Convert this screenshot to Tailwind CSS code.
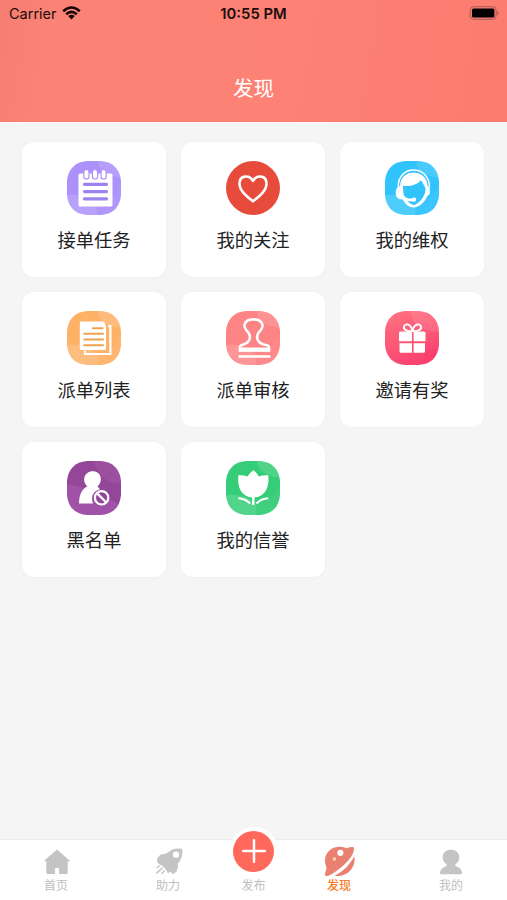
<!DOCTYPE html>
<html lang="zh-CN">
<head>
<meta charset="utf-8">
<meta name="viewport" content="width=device-width, initial-scale=1">
<title>发现</title>
<script src="https://cdn.jsdelivr.net/npm/@tailwindcss/browser@4"></script>
</head>
<body class="bg-[#f5f5f5]">
<svg width="0" height="0" class="absolute" aria-hidden="true">
  <defs>
    <clipPath id="tile"><path d="M20 0H34C46 1 53 8 54 20V34C53 46 46 53 34 54H20C8 53 1 46 0 34V20C1 8 8 1 20 0Z"/></clipPath>
    <linearGradient id="pink" x1="0" y1="0" x2="0.4" y2="1"><stop stop-color="#ff7580"/><stop offset="1" stop-color="#fb4370"/></linearGradient>
    <g id="facets">
      <path d="M31 0Q31 14 54 17V0Z" fill="#fff" opacity=".13"/>
      <path d="M0 34Q20 32 30 43V54H0Z" fill="#fff" opacity=".15"/>
      <path d="M30 43Q46 40 54 24V54H30Z" fill="#fff" opacity=".05"/>
    </g>
  </defs>
</svg>
<div class="flex h-[900px] w-[507px] flex-col overflow-hidden font-['Inter','Noto_Sans_CJK_SC',sans-serif]">
  <header class="flex h-[122px] shrink-0 flex-col bg-[linear-gradient(100deg,#f67d71_0%,#fb8276_10%,#fd8276_50%,#fc7b6f_100%)]">
    <div class="grid h-7 grid-cols-3 items-center px-[8px] text-[#1c0d0c]">
      <div class="flex items-center gap-[6px] pl-px text-[14.5px]">
        <span>Carrier</span>
        <svg class="-ml-px -mt-0.5 h-[14px] w-[19px]" viewBox="0 0 19 14" fill="none" stroke="#160808" stroke-width="2.5"><path d="M1.2 5.2Q9.5-2.2 17.8 5.2M4.2 8.3Q9.5 3.5 14.8 8.3"/><path d="M6.2 10.1Q9.5 7.5 12.8 10.1L9.5 13.5Z" fill="#160808" stroke="none"/></svg>
      </div>
      <div class="whitespace-nowrap text-center text-[14.8px] font-semibold">10:55 PM</div>
      <svg class="-mt-0.5 h-[14px] w-[30px] justify-self-end" viewBox="0 0 30 14"><rect x="1.2" y=".7" width="26" height="12.6" rx="3.6" fill="none" stroke="#a45a54"/><rect x="3" y="2.5" width="22.4" height="9" rx="1.6" fill="#000"/><path d="M28.6 4.8Q31 7 28.6 9.2Z" fill="#a45a54"/></svg>
    </div>
    <h1 class="mt-[45px] text-center text-[20.5px] leading-[32px] text-white">发现</h1>
  </header>

  <main class="grid flex-1 grid-cols-[repeat(3,144px)] auto-rows-[135px] content-start gap-x-[15px] gap-y-[15.2px] px-[22px] pt-5 text-[18.3px] leading-[28px] text-[#222]">
    <section class="flex flex-col items-center gap-[11px] rounded-[12px] bg-white pt-[19px] shadow-[0_0_3px_#0000000a]">
      <svg class="size-[54px]" viewBox="0 0 54 54"><g clip-path="url(#tile)"><path fill="#ac91fb" d="M0 0h54v54H0z"/><use href="#facets"/></g>
        <rect x="11.5" y="12.5" width="34" height="33" rx="1.5" fill="#fff"/>
        <g fill="#fff" stroke="#ac91fb" stroke-width="1.2"><rect x="16.8" y="8.5" width="5.2" height="9.5" rx="2.6"/><rect x="25.4" y="8.5" width="5.2" height="9.5" rx="2.6"/><rect x="34" y="8.5" width="5.2" height="9.5" rx="2.6"/></g>
        <path d="M17.5 23.3h22M17.5 30.6h22M17.5 37.9h22" stroke="#9c83ed" stroke-width="3.3" stroke-linecap="round"/></svg>
      <span>接单任务</span>
    </section>
    <section class="flex flex-col items-center gap-[11px] rounded-[12px] bg-white pt-[19px] shadow-[0_0_3px_#0000000a]">
      <svg class="size-[54px]" viewBox="0 0 54 54"><circle cx="27" cy="27" r="27" fill="#e74b3c"/><path d="M27 40.3C21 35.6 13.5 30 13.5 22.5C13.5 14 23.5 13.4 27 20C30.5 13.4 40.5 14 40.5 22.5C40.5 30 33 35.6 27 40.3Z" fill="none" stroke="#fff" stroke-width="2.6" stroke-linejoin="round"/></svg>
      <span>我的关注</span>
    </section>
    <section class="flex flex-col items-center gap-[11px] rounded-[12px] bg-white pt-[19px] shadow-[0_0_3px_#0000000a]">
      <svg class="size-[54px]" viewBox="0 0 54 54"><g clip-path="url(#tile)"><path fill="#30c3fc" d="M0 0h54v54H0z"/><use href="#facets"/></g>
        <path d="M13.2 26C12.8 3.2 44.2 3.2 44.5 26" fill="none" stroke="#fff" stroke-width="1.5"/>
        <path d="M15.2 25C15.3 6.8 42 7.2 42.5 25L44.8 26.5V33L42.3 35C40 41 34 46.5 28.5 46.5C23.5 46.5 20 42.5 17.8 38.5C12 38.5 10.5 35 10.7 31C10.8 27.5 12.5 25.5 15.2 25Z" fill="#fff"/>
        <path d="M17.8 24.8C25.5 25.8 32 23.7 36 19.2C38 21.7 39 25 40.5 27C41 34 36 40.5 30 43.8C27.5 44.3 24.5 42.5 22.8 40L27.5 40.5C30 41.2 31.3 40 31.2 38.2C31 36.3 28.2 36 26.9 37.5C22.5 38 19.8 36.8 18.6 33.5Z" fill="#30c3fc"/></svg>
      <span>我的维权</span>
    </section>
    <section class="flex flex-col items-center gap-[11px] rounded-[12px] bg-white pt-[19px] shadow-[0_0_3px_#0000000a]">
      <svg class="size-[54px]" viewBox="0 0 54 54"><g clip-path="url(#tile)"><path fill="#fdb268" d="M0 0h54v54H0z"/><use href="#facets"/></g>
        <path d="M41 15.2H43.4V43H18V39.8" fill="none" stroke="#fff" stroke-width="2.2"/>
        <path d="M14 10.5H37L39 15V37.5Q39 39 37.5 39H14.3Q12.8 39 12.8 37.5V11.7Q12.8 10.5 14 10.5Z" fill="#fff"/>
        <path d="M26 17.2H35.5M17.3 22.8H36M17.3 28.5H36M17.3 34.3H36" stroke="#f4a050" stroke-width="2.1" stroke-linecap="round"/></svg>
      <span>派单列表</span>
    </section>
    <section class="flex flex-col items-center gap-[11px] rounded-[12px] bg-white pt-[19px] shadow-[0_0_3px_#0000000a]">
      <svg class="size-[54px]" viewBox="0 0 54 54"><g clip-path="url(#tile)"><path fill="#fe8384" d="M0 0h54v54H0z"/><use href="#facets"/></g>
        <g fill="none" stroke="#fff" stroke-width="2.6"><path d="M14 39.4V36.2Q14 34.5 16 34C22.5 32.5 25.8 28 22.7 22C19.6 18.8 17.9 16.5 18.5 13.8C20.3 6.5 34.7 6.5 36.5 13.8C37.1 16.5 35.4 18.8 32.3 22C29.2 28 32.5 32.5 40 34Q43 34.5 43 36.2V39.4Z"/><path d="M12.5 45.5H44.5"/></g><path d="M13 36.5h31v4H13z" fill="#fff"/></svg>
      <span>派单审核</span>
    </section>
    <section class="flex flex-col items-center gap-[11px] rounded-[12px] bg-white pt-[19px] shadow-[0_0_3px_#0000000a]">
      <svg class="size-[54px]" viewBox="0 0 54 54"><g clip-path="url(#tile)"><path fill="url(#pink)" d="M0 0h54v54H0z"/><path d="M25 0L31 16L54 22V0Z" fill="#fff" opacity=".1"/><path d="M31 16L54 22V38H39V54H54V22Z" fill="#f32f65" opacity=".2"/></g>
        <path d="M15.5 20.5H27V30.3H14V22Q14 20.5 15.5 20.5ZM28.6 20.5H39Q40.5 20.5 40.5 22V30.3H28.6ZM14.5 32.2H27V41.7H16Q14.5 41.7 14.5 40.2ZM28.6 32.2H40V40.2Q40 41.7 38.5 41.7H28.6Z" fill="#fff"/>
        <path d="M27.5 20C22 20.5 18 18.5 19 15.5C20.5 11.5 26 13.2 27.5 20C29 13.2 34.5 11.5 36 15.5C37 18.5 33 20.5 27.5 20Z" fill="none" stroke="#fff" stroke-width="1.9"/></svg>
      <span>邀请有奖</span>
    </section>
    <section class="flex flex-col items-center gap-[11px] rounded-[12px] bg-white pt-[19px] shadow-[0_0_3px_#0000000a]">
      <svg class="size-[54px]" viewBox="0 0 54 54"><g clip-path="url(#tile)"><path fill="#944699" d="M0 0h54v54H0z"/><path d="M27 0Q33 22 54 23V0Z" fill="#fff" opacity=".06"/><path d="M0 23Q22 26 54 44V54H0Z" fill="#c26fd0" opacity=".28"/></g>
        <path d="M12 42.5C12.3 33 15.3 27.8 20.5 25.3C14.5 20.5 17 10.2 25.7 10.2C34.5 10.2 36.5 20.5 30.5 25.3L33 28.5C28.5 29 25 33 25 37.5Q25 40.5 26 42.5Z" fill="#fff"/>
        <circle cx="34.6" cy="36.8" r="6.7" fill="#944699" stroke="#fff" stroke-width="2.2"/><path d="M30.4 32.6L38.8 41" stroke="#fff" stroke-width="2.2"/></svg>
      <span>黑名单</span>
    </section>
    <section class="flex flex-col items-center gap-[11px] rounded-[12px] bg-white pt-[19px] shadow-[0_0_3px_#0000000a]">
      <svg class="size-[54px]" viewBox="0 0 54 54"><g clip-path="url(#tile)"><path fill="#35cd77" d="M0 0h54v54H0z"/><use href="#facets"/></g>
        <path d="M12.4 14.3Q17.5 13.8 21.5 15.6Q24 11.5 27.3 9.3Q30.7 11.5 33 15.6Q37 13.8 42.3 14.3C43.5 27 39 35 28.5 36.6V44H26.1V36.6C15.6 35 11.1 27 12.4 14.3Z" fill="#fff"/>
        <path d="M12.4 37.2Q19.5 37.5 24.2 42.5M42.3 37.2Q35.2 37.5 30.4 42.5" fill="none" stroke="#fff" stroke-width="2.1"/></svg>
      <span>我的信誉</span>
    </section>
  </main>

  <nav class="grid h-[61px] shrink-0 grid-cols-[112px_112px_59px_112px_112px] border-t border-[#eeeeee] bg-white text-[12px] leading-[16px] text-[#bebebe]">
    <div class="flex flex-col items-center justify-between pb-[6px] pt-[9px]">
      <svg class="ml-0.5 size-[26px]" viewBox="0 0 26 26" fill="#c4c4c4"><path d="M13 .5L25.7 11.5Q26 12.7 24.2 12.3L23.7 12V23.5Q23.7 25 22.2 25H15V19.8Q13 17.5 11 19.8V25H3.8Q2.3 25 2.3 23.5V12L1.8 12.3Q0 12.7.3 11.5Z"/></svg>
      <span>首页</span>
    </div>
    <div class="flex flex-col items-center justify-between pb-[6px] pt-[8px]">
      <svg class="ml-0.5 size-[27px]" viewBox="0 0 27 27" fill="#c4c4c4"><path fill-rule="evenodd" d="M26.2.8Q27.3 8 23.5 13.4L21.8 15.6Q22.3 18 21.6 20.4Q20.5 24.5 16.8 26.2L14.5 23.2L12 25.6Q9.8 19.2 2.3 15.5L1 13.4Q.8 11 2 9.2Q4.5 5.8 8.4 6L12 4.4Q16.8-.5 26.2.8ZM20 3.6A3.1 3.1 0 1 0 20 9.8A3.1 3.1 0 1 0 20 3.6Z"/><path d="M.6 20L3.6 17.5M.4 25.5L6.6 19.6M5.5 26L8.6 22.4" stroke="#c4c4c4" stroke-width="1.5"/></svg>
      <span>助力</span>
    </div>
    <div class="relative flex flex-col items-center justify-end pb-[6px]">
      <div class="absolute -top-[13px] left-[5.5px] flex size-12 items-center justify-center rounded-full bg-white">
        <div class="flex size-[41px] items-center justify-center rounded-full bg-[#fe695b]">
          <svg class="size-6" viewBox="0 0 24 24" fill="none" stroke="#fff" stroke-width="2.5" stroke-linecap="round"><path d="M12 1.2V22.8M1.2 12H22.8"/></svg>
        </div>
      </div>
      <span>发布</span>
    </div>
    <div class="flex flex-col items-center justify-between pb-[6px] pt-[6px] font-medium text-[#f67b28]">
      <svg class="-mb-1 h-[31px] w-[31px] shrink-0" viewBox="0 0 31 31"><path d="M1.3 29.5C.3 27 2.8 24 2.4 21.5C-1.8 12 3.5 1.2 15 .8Q20 .6 22.5 2.3C25.5 1.2 28.5.4 29.8 1.5C31.2 8.5 22 18.5 11 26C7 28.8 3 31.2 1.3 29.5Z" fill="#e98072"/><path d="M10.5 29.8C19.5 25.3 26 18.5 30.3 10C32.5 21 23.5 32 10.5 29.8Z" fill="#e98072"/><path d="M10 28.3Q23.5 20.5 30.3 9" fill="none" stroke="#fff" stroke-width="1.4"/><circle cx="16.4" cy="6.8" r="3.1" fill="#fff"/><circle cx="10.4" cy="13" r="1.7" fill="#ffdba6"/></svg>
      <span>发现</span>
    </div>
    <div class="flex flex-col items-center justify-between pb-[6px] pt-[9px]">
      <svg class="h-[26px] w-6" viewBox="0 0 24 26" fill="#c4c4c4"><path d="M12 .8C19 .8 22.2 7.2 19.2 12.5Q18 14.5 16 15.8Q16 17.3 19 18.2Q22.8 20 23 24Q23 25.2 21.8 25.2H2.2Q1 25.2 1 24Q1.2 20 5 18.2Q8 17.3 8 15.8Q6 14.5 4.8 12.5C1.8 7.2 5 .8 12 .8Z"/></svg>
      <span>我的</span>
    </div>
  </nav>
</div>
</body>
</html>
